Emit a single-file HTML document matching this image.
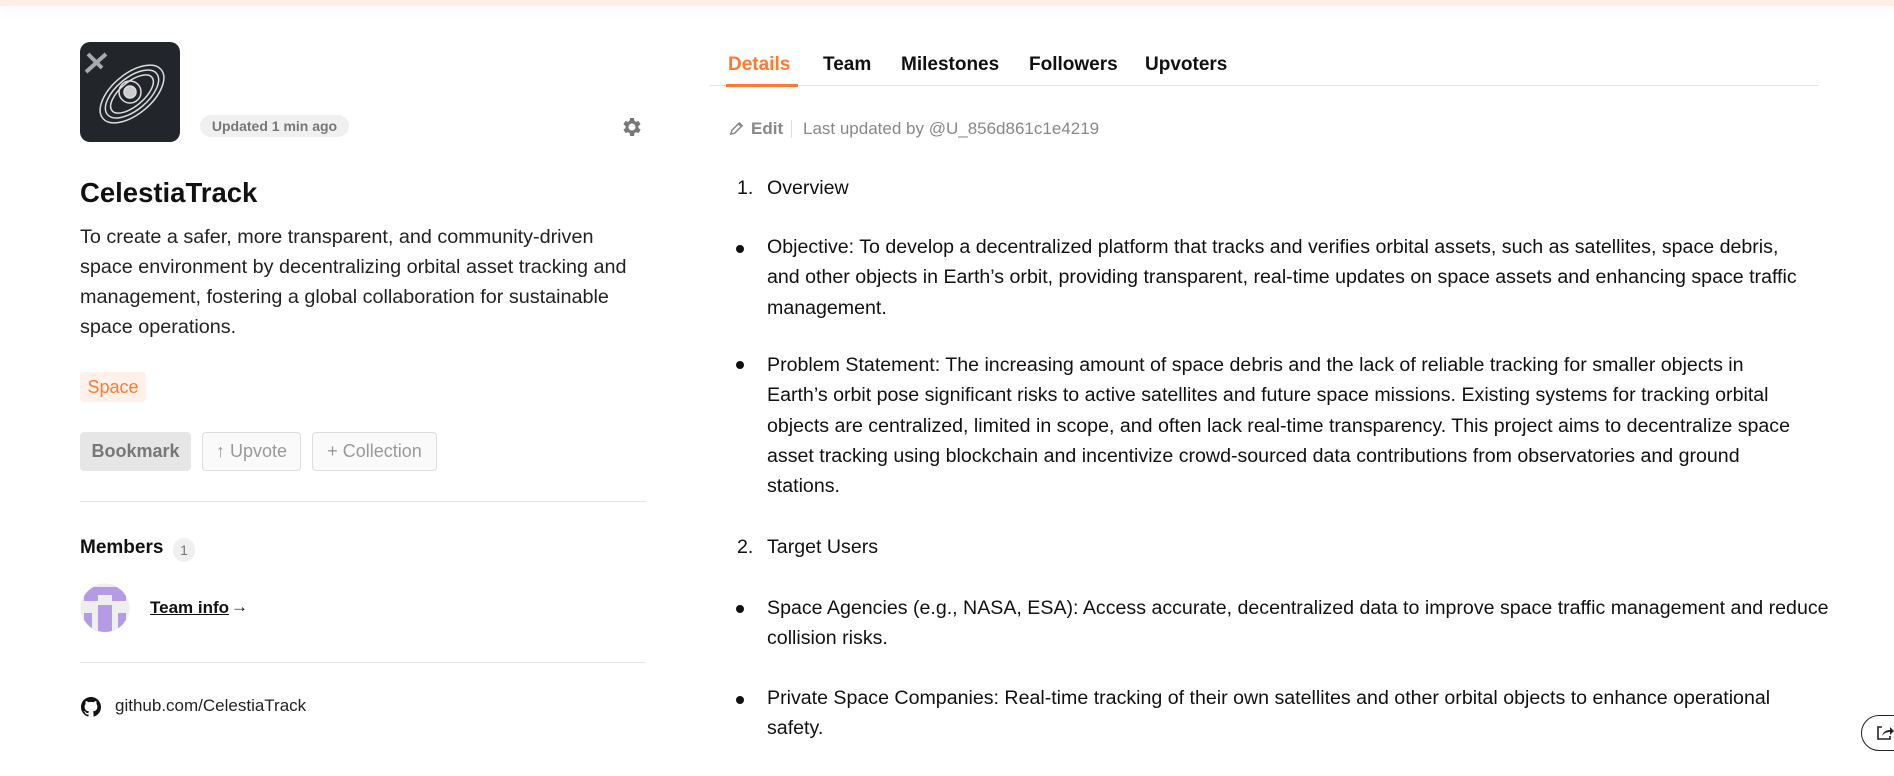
<!DOCTYPE html>
<html><head><meta charset="utf-8"><style>
*{margin:0;padding:0;box-sizing:border-box}
body{width:1894px;height:776px;overflow:hidden;background:#fff;font-family:"Liberation Sans",sans-serif;color:#111;position:relative}
.a{position:absolute;white-space:nowrap}
.top{position:absolute;left:0;top:0;width:1894px;height:6px;background:#fcefe8;box-shadow:0 4px 14px rgba(0,0,0,.05)}
.btn{position:absolute;top:432px;height:39px;border-radius:4px;font-size:18px;line-height:37px;text-align:center;color:#999;border:1px solid #ddd;background:#fafafa}
.hr{position:absolute;left:80px;width:566px;height:1px;background:#e5e5e5}
.tab{position:absolute;top:54px;font-size:19px;font-weight:bold;color:#111}
.t{position:absolute;left:767px;font-size:19.6px;line-height:30.3px;color:#111;white-space:nowrap}
.b{position:absolute;left:736px;width:8px;height:8px;border-radius:50%;background:#111}
.n{position:absolute;left:737px;font-size:19.6px;line-height:30px}
</style></head><body>
<div class="top"></div>
<svg class="a" style="left:80px;top:42px" width="100" height="100" viewBox="0 0 100 100">
<rect width="100" height="100" rx="10" fill="#22262b"/>
<g fill="none" stroke="#ddd" stroke-width="1.5">
<ellipse cx="52" cy="52" rx="38" ry="20" transform="rotate(-40 52 52)"/>
<ellipse cx="52" cy="52" rx="32" ry="16" transform="rotate(-40 52 52)"/>
<ellipse cx="52" cy="52" rx="26" ry="12" transform="rotate(-40 52 52)"/>
<circle cx="50" cy="50" r="11"/><circle cx="50" cy="50" r="6" fill="#ccc"/>
</g>
<g stroke="#aaa" stroke-width="4"><line x1="6" y1="30" x2="26" y2="12"/><line x1="8" y1="12" x2="22" y2="26"/></g>
</svg>
<div class="a" style="left:200px;top:115px;height:22px;width:149px;border-radius:11px;background:#f0f0f0;color:#777;font-size:14px;font-weight:bold;line-height:22px;text-align:center">Updated 1 min ago</div>
<svg class="a" style="left:619px;top:115px" width="24" height="24" viewBox="0 0 24 24"><path fill="#777" d="M19.4 13a7.5 7.5 0 000-2l2.1-1.6-2-3.5-2.5 1a7.6 7.6 0 00-1.7-1L15 3h-4l-.4 2.9a7.6 7.6 0 00-1.7 1l-2.5-1-2 3.5L6.6 11a7.5 7.5 0 000 2l-2.1 1.6 2 3.5 2.5-1a7.6 7.6 0 001.7 1L11 21h4l.4-2.9a7.6 7.6 0 001.7-1l2.5 1 2-3.5zM13 15.5A3.5 3.5 0 1113 8.5a3.5 3.5 0 010 7z"/></svg>
<div class="a" style="left:80px;top:177px;font-size:27.5px;font-weight:bold">CelestiaTrack</div>
<div class="a" style="left:80px;top:222px;font-size:19.8px;line-height:30px;color:#222">To create a safer, more transparent, and community-driven<br>space environment by decentralizing orbital asset tracking and<br>management, fostering a global collaboration for sustainable<br>space operations.</div>
<div class="a" style="left:80px;top:372px;width:66px;height:30px;background:#fff1ea;border-radius:4px;color:#ff7a2f;font-size:18px;line-height:30px;text-align:center">Space</div>
<div class="btn" style="left:80px;width:111px;background:#e6e6e6;border-color:#e6e6e6;color:#777;font-weight:bold">Bookmark</div>
<div class="btn" style="left:202px;width:99px">↑ Upvote</div>
<div class="btn" style="left:312px;width:125px">+ Collection</div>
<div class="hr" style="top:501px"></div>
<div class="a" style="left:80px;top:537px;font-size:19px;font-weight:bold">Members</div>
<div class="a" style="left:173px;top:538px;width:22px;height:24px;border-radius:11px;background:#f0f0f0;color:#777;font-size:14px;line-height:24px;text-align:center">1</div>
<svg class="a" style="left:80px;top:583px" width="50" height="50" viewBox="0 0 50 50"><defs><clipPath id="c"><circle cx="25" cy="25" r="24"/></clipPath></defs><circle cx="25" cy="25" r="24.5" fill="#eee"/><g clip-path="url(#c)" fill="#b59be6"><rect x="4" y="4" width="14" height="14"/><rect x="32" y="4" width="14" height="14"/><rect x="18" y="4" width="14" height="8"/><rect x="18" y="22" width="14" height="28"/><rect x="4" y="30" width="8" height="20"/><rect x="38" y="30" width="8" height="20"/></g></svg>
<div class="a" style="left:150px;top:598px;font-size:17px;font-weight:bold;text-decoration:underline">Team info</div>
<div class="a" style="left:231px;top:597px;font-size:17px">→</div>
<div class="hr" style="top:662px"></div>
<svg class="a" style="left:81px;top:697px" width="20" height="20" viewBox="0 0 16 16"><path fill="#111" d="M8 0C3.58 0 0 3.580 0 8c0 3.54 2.29 6.53 5.47 7.59.4.07.55-.17.55-.38v-1.33c-2.230.48-2.7-1.07-2.7-1.07-.36-.92-.89-1.17-.89-1.17-.73-.5.05-.49.05-.49.8.06 1.23.83 1.23.83.71 1.22 1.87.87 2.33.66.07-.52.28-.87.5-1.07-1.78-.2-3.64-.89-3.64-3.95 0-.87.31-1.59.82-2.150-.08-.2-.36-1.02.08-2.12 0 0 .67-.21 2.2.82a7.6 7.6 0 014 0c1.53-1.04 2.2-.82 2.2-.82.44 1.1.16 1.92.08 2.12.51.56.82 1.27.82 2.15 0 3.07-1.87 3.75-3.65 3.95.29.25.54.73.54 1.48v2.2c0 .21.15.46.55.38A8 8 0 0016 8c0-4.42-3.58-8-8-8z"/></svg>
<div class="a" style="left:115px;top:696px;font-size:17px;color:#222">github.com/CelestiaTrack</div>

<div class="tab" style="left:728px;color:#ff7a2f">Details</div>
<div class="tab" style="left:823px">Team</div>
<div class="tab" style="left:901px">Milestones</div>
<div class="tab" style="left:1029px">Followers</div>
<div class="tab" style="left:1145px">Upvoters</div>
<div class="a" style="left:710px;top:85px;width:1109px;height:1px;background:#e3e3e3"></div>
<div class="a" style="left:726px;top:84px;width:72px;height:3px;background:#ff7a2f"></div>
<svg class="a" style="left:729px;top:121px" width="15" height="15" viewBox="0 0 16 16"><path fill="none" stroke="#888" stroke-width="1.6" d="M2 14l1-4 8-8 3 3-8 8zM10 3l3 3"/></svg>
<div class="a" style="left:751px;top:119px;font-size:17px;font-weight:bold;color:#888">Edit</div>
<div class="a" style="left:791px;top:120px;width:1px;height:18px;background:#ddd"></div>
<div class="a" style="left:803px;top:119px;font-size:17px;color:#888">Last updated by @U_856d861c1e4219</div>

<div class="n" style="top:173px">1.</div><div class="t" style="top:173px">Overview</div>
<div class="b" style="top:245px"></div>
<div class="t" style="top:232px">Objective: To develop a decentralized platform that tracks and verifies orbital assets, such as satellites, space debris,<br>and other objects in Earth’s orbit, providing transparent, real-time updates on space assets and enhancing space traffic<br>management.</div>
<div class="b" style="top:361px"></div>
<div class="t" style="top:350px">Problem Statement: The increasing amount of space debris and the lack of reliable tracking for smaller objects in<br>Earth’s orbit pose significant risks to active satellites and future space missions. Existing systems for tracking orbital<br>objects are centralized, limited in scope, and often lack real-time transparency. This project aims to decentralize space<br>asset tracking using blockchain and incentivize crowd-sourced data contributions from observatories and ground<br>stations.</div>
<div class="n" style="top:532px">2.</div><div class="t" style="top:532px">Target Users</div>
<div class="b" style="top:605px"></div>
<div class="t" style="top:593px">Space Agencies (e.g., NASA, ESA): Access accurate, decentralized data to improve space traffic management and reduce<br>collision risks.</div>
<div class="b" style="top:696px"></div>
<div class="t" style="top:683px">Private Space Companies: Real-time tracking of their own satellites and other orbital objects to enhance operational<br>safety.</div>
<div class="a" style="left:1861px;top:715px;width:50px;height:36px;border:1.5px solid #222;border-radius:18px;background:#fff"></div>
<svg class="a" style="left:1876px;top:725px" width="18" height="16" viewBox="0 0 18 16"><path fill="none" stroke="#222" stroke-width="1.6" d="M6 2H2v12h12v-3"/><path fill="#222" d="M6 11c1-4 4-6 8-6V2l4 4-4 4V7c-3 0-6 1-8 4z"/></svg>
</body></html>
